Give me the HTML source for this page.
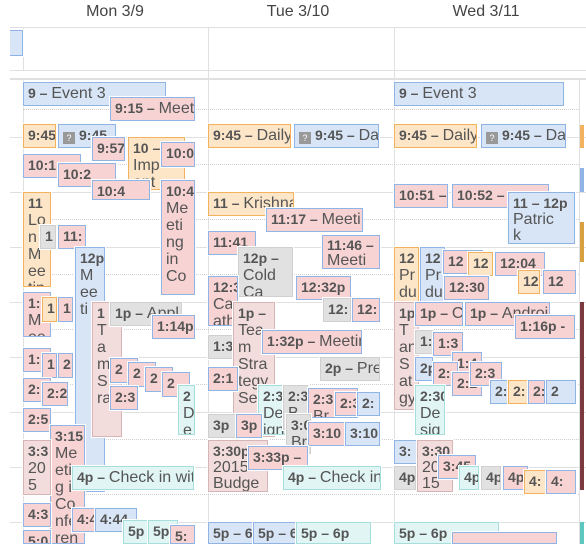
<!DOCTYPE html>
<html><head><meta charset="utf-8"><style>
*{margin:0;padding:0;box-sizing:border-box}
body{width:586px;height:544px;overflow:hidden;background:#fff;font-family:"Liberation Sans",Arial,sans-serif;color:#555;position:relative}
.h{position:absolute;top:3px;font-size:16px;color:#444;width:120px;text-align:center}
.l{position:absolute;background:#e0e0e0}
.d{position:absolute;left:23px;width:556px;height:0;border-top:1px dotted #d0d0d0}
.e{position:absolute;overflow:hidden;border:1px solid #90b4e6;outline:1px solid #fff;padding:2px 4px;font-size:16px;line-height:17px;white-space:nowrap}
.e b{font-size:14px}
.bl{background:#d8e5f6;border-color:#90b4e6}
.pk{background:#f7d3d3;border-color:#90b4e6}
.or{background:#fde6c8;border-color:#f2b25e}
.gr{background:#e1e1e1;border-color:#d0d0d0}
.tl{background:#e0f5f4;border-color:#a6dedb}
.mv{background:#f2dcdc;border-color:#d5b5b5}
.q{display:inline-block;width:12px;height:12px;background:#999;color:#fff;font-size:9px;line-height:12px;text-align:center;vertical-align:-1px;margin-right:4px}
</style></head><body>
<div class="h" style="left:55px">Mon 3/9</div>
<div class="h" style="left:238px">Tue 3/10</div>
<div class="h" style="left:426px">Wed 3/11</div>
<div class="l" style="left:10px;top:27px;width:576px;height:1px"></div>
<div class="l" style="left:10px;top:70px;width:576px;height:1px"></div>
<div class="l" style="left:10px;top:78px;width:576px;height:2px"></div>
<div class="l" style="left:23px;top:28px;width:1px;height:43px"></div>
<div class="l" style="left:208px;top:28px;width:1px;height:516px"></div>
<div class="l" style="left:394px;top:28px;width:1px;height:516px"></div>
<div class="l" style="left:579px;top:80px;width:1px;height:464px"></div>
<div class="l" style="left:23px;top:80px;width:1px;height:464px"></div>
<div class="e bl" style="left:10px;top:30px;width:13px;height:26px;border-left:none"></div>
<div class="l" style="left:10px;top:137px;width:576px;height:1px"></div>
<div class="l" style="left:10px;top:192px;width:576px;height:1px"></div>
<div class="l" style="left:10px;top:247px;width:576px;height:1px"></div>
<div class="l" style="left:10px;top:302px;width:576px;height:1px"></div>
<div class="l" style="left:10px;top:357px;width:576px;height:1px"></div>
<div class="l" style="left:10px;top:412px;width:576px;height:1px"></div>
<div class="l" style="left:10px;top:467px;width:576px;height:1px"></div>
<div class="l" style="left:10px;top:522px;width:576px;height:1px"></div>
<div class="d" style="top:109px"></div><div class="d" style="top:164px"></div><div class="d" style="top:219px"></div><div class="d" style="top:274px"></div><div class="d" style="top:329px"></div><div class="d" style="top:384px"></div><div class="d" style="top:439px"></div><div class="d" style="top:494px"></div>
<div class="l" style="left:580px;top:125px;width:4px;height:23px;background:#f2b25e"></div>
<div class="l" style="left:580px;top:168px;width:4px;height:24px;background:#90b4e6"></div>
<div class="l" style="left:580px;top:222px;width:4px;height:40px;background:#d9a040"></div>
<div class="l" style="left:580px;top:302px;width:4px;height:188px;background:#7a3a40"></div>
<div class="l" style="left:580px;top:522px;width:4px;height:22px;background:#5cc8c0"></div>

<!-- Mon -->
<div class="e bl" style="left:23px;top:82px;width:143px;height:24px"><b>9 – </b>Event 3</div>
<div class="e pk" style="left:110px;top:97px;width:85px;height:24px"><b>9:15 – </b>Meet</div>
<div class="e or" style="left:23px;top:124px;width:33px;height:24px"><b>9:45</b></div>
<div class="e bl" style="left:58px;top:124px;width:58px;height:24px"><span class="q">?</span><b>9:45</b></div>
<div class="e pk" style="left:92px;top:137px;width:33px;height:24px"><b>9:57</b></div>
<div class="e or" style="left:128px;top:137px;width:57px;height:53px;white-space:normal"><b>10 –</b><br>Imp<br>ant</div>
<div class="e pk" style="left:161px;top:142px;width:34px;height:25px"><b>10:0</b></div>
<div class="e pk" style="left:23px;top:154px;width:58px;height:24px"><b>10:1</b></div>
<div class="e pk" style="left:58px;top:163px;width:58px;height:24px"><b>10:2</b></div>
<div class="e pk" style="left:92px;top:180px;width:58px;height:20px"><b>10:4</b></div>
<div class="e pk" style="left:161px;top:180px;width:34px;height:115px"><b>10:4</b><br>Me<br>eti<br>ng<br>in<br>Co</div>
<div class="e or" style="left:23px;top:192px;width:28px;height:95px"><b>11</b><br>Lo<br>n<br>M<br>ee<br>tin</div>
<div class="e gr" style="left:40px;top:225px;width:16px;height:24px"><b>1</b></div>
<div class="e pk" style="left:58px;top:225px;width:28px;height:24px"><b>11:</b></div>
<div class="e bl" style="left:75px;top:247px;width:30px;height:245px"><b>12p</b><br>M<br>ee<br>ti</div>
<div class="e pk" style="left:23px;top:292px;width:28px;height:45px"><b>1:</b><br>M<br>ee</div>
<div class="e or" style="left:42px;top:297px;width:15px;height:25px"><b>1</b></div>
<div class="e pk" style="left:58px;top:297px;width:15px;height:25px"><b>1</b></div>
<div class="e mv" style="left:92px;top:302px;width:30px;height:135px"><b>1</b><br>T<br>a<br>m<br>S<br>ra</div>
<div class="e gr" style="left:110px;top:302px;width:72px;height:24px"><b>1p – </b>Appl</div>
<div class="e pk" style="left:152px;top:315px;width:43px;height:24px"><b>1:14p</b></div>
<div class="e pk" style="left:23px;top:348px;width:28px;height:24px"><b>1:</b></div>
<div class="e pk" style="left:42px;top:353px;width:15px;height:25px"><b>1</b></div>
<div class="e pk" style="left:58px;top:353px;width:15px;height:25px"><b>2</b></div>
<div class="e pk" style="left:110px;top:358px;width:28px;height:25px"><b>2</b></div>
<div class="e pk" style="left:128px;top:362px;width:28px;height:25px"><b>2</b></div>
<div class="e pk" style="left:145px;top:367px;width:28px;height:25px"><b>2</b></div>
<div class="e pk" style="left:162px;top:372px;width:28px;height:25px"><b>2</b></div>
<div class="e tl" style="left:178px;top:385px;width:17px;height:50px"><b>2</b><br>D<br>e</div>
<div class="e pk" style="left:23px;top:378px;width:28px;height:24px"><b>2:</b></div>
<div class="e pk" style="left:42px;top:382px;width:26px;height:24px"><b>2:2</b></div>
<div class="e pk" style="left:110px;top:386px;width:28px;height:24px"><b>2:3</b></div>
<div class="e pk" style="left:23px;top:408px;width:28px;height:24px"><b>2:5</b></div>
<div class="e pk" style="left:50px;top:425px;width:35px;height:119px"><b>3:15</b><br>Me<br>eti<br>g i<br>Co<br>nfe<br>ren</div>
<div class="e mv" style="left:23px;top:440px;width:28px;height:55px"><b>3:3</b><br>20<br>5</div>
<div class="e tl" style="left:72px;top:466px;width:122px;height:24px"><b>4p – </b>Check in wit</div>
<div class="e pk" style="left:23px;top:503px;width:28px;height:24px"><b>4:3</b></div>
<div class="e pk" style="left:72px;top:508px;width:28px;height:24px"><b>4:4</b></div>
<div class="e bl" style="left:95px;top:508px;width:42px;height:24px"><b>4:44</b></div>
<div class="e tl" style="left:123px;top:520px;width:35px;height:24px"><b>5p</b></div>
<div class="e tl" style="left:148px;top:520px;width:30px;height:24px"><b>5p</b></div>
<div class="e pk" style="left:170px;top:525px;width:25px;height:19px"><b>5:</b></div>
<div class="e pk" style="left:23px;top:530px;width:28px;height:14px"><b>5:0</b></div>

<!-- Tue -->
<div class="e or" style="left:208px;top:124px;width:83px;height:24px"><b>9:45 – </b>Daily</div>
<div class="e bl" style="left:294px;top:124px;width:85px;height:24px"><span class="q">?</span><b>9:45 – </b>Da</div>
<div class="e or" style="left:208px;top:192px;width:86px;height:24px"><b>11 – </b>Krishna</div>
<div class="e pk" style="left:266px;top:208px;width:97px;height:24px"><b>11:17 – </b>Meeti</div>
<div class="e pk" style="left:208px;top:231px;width:48px;height:24px"><b>11:41</b></div>
<div class="e pk" style="left:322px;top:235px;width:58px;height:34px;line-height:15px"><b>11:46 –</b><br>Meeti</div>
<div class="e gr" style="left:238px;top:247px;width:55px;height:50px"><b>12p –</b><br>Cold<br>Ca</div>
<div class="e pk" style="left:208px;top:276px;width:30px;height:50px"><b>12:3</b><br>Ca<br>ath</div>
<div class="e pk" style="left:296px;top:276px;width:55px;height:24px"><b>12:32p</b></div>
<div class="e gr" style="left:323px;top:298px;width:28px;height:24px"><b>12:</b></div>
<div class="e pk" style="left:352px;top:298px;width:28px;height:24px"><b>12:</b></div>
<div class="e gr" style="left:208px;top:335px;width:28px;height:24px"><b>1:3</b></div>
<div class="e mv" style="left:233px;top:302px;width:42px;height:135px"><b>1p –</b><br>Tea<br>m<br>Stra<br>tegy<br>Se</div>
<div class="e pk" style="left:262px;top:330px;width:100px;height:24px"><b>1:32p – </b>Meetin</div>
<div class="e pk" style="left:208px;top:367px;width:30px;height:24px"><b>2:1</b></div>
<div class="e gr" style="left:320px;top:357px;width:60px;height:24px"><b>2p – </b>Pre</div>
<div class="e tl" style="left:258px;top:385px;width:40px;height:50px"><b>2:3</b><br>De<br>ign</div>
<div class="e gr" style="left:283px;top:385px;width:25px;height:45px"><b>2:3</b><br>B</div>
<div class="e pk" style="left:308px;top:388px;width:50px;height:30px"><b>2:3</b><br>Br</div>
<div class="e pk" style="left:335px;top:392px;width:28px;height:24px"><b>2:3</b></div>
<div class="e bl" style="left:357px;top:392px;width:23px;height:24px"><b>2:</b></div>
<div class="e gr" style="left:208px;top:414px;width:28px;height:24px"><b>3p</b></div>
<div class="e pk" style="left:236px;top:414px;width:26px;height:24px"><b>3p</b></div>
<div class="e gr" style="left:286px;top:414px;width:25px;height:40px"><b>3:0</b><br>Br</div>
<div class="e pk" style="left:308px;top:422px;width:42px;height:24px"><b>3:10</b></div>
<div class="e bl" style="left:345px;top:422px;width:35px;height:24px"><b>3:10</b></div>
<div class="e mv" style="left:208px;top:440px;width:60px;height:52px;line-height:16px"><b>3:30p</b><br>2015<br>Budge</div>
<div class="e pk" style="left:248px;top:446px;width:60px;height:24px"><b>3:33p – </b></div>
<div class="e tl" style="left:283px;top:466px;width:98px;height:24px"><b>4p – </b>Check in</div>
<div class="e bl" style="left:208px;top:522px;width:45px;height:22px"><b>5p – 6</b></div>
<div class="e bl" style="left:253px;top:522px;width:45px;height:22px"><b>5p – 6</b></div>
<div class="e tl" style="left:296px;top:522px;width:75px;height:22px"><b>5p – 6p</b></div>

<!-- Wed -->
<div class="e bl" style="left:394px;top:82px;width:170px;height:24px"><b>9 – </b>Event 3</div>
<div class="e or" style="left:394px;top:124px;width:83px;height:24px"><b>9:45 – </b>Daily</div>
<div class="e bl" style="left:481px;top:124px;width:85px;height:24px"><span class="q">?</span><b>9:45 – </b>Da</div>
<div class="e pk" style="left:394px;top:184px;width:54px;height:24px"><b>10:51 – </b></div>
<div class="e pk" style="left:452px;top:184px;width:97px;height:24px"><b>10:52 – </b></div>
<div class="e bl" style="left:508px;top:192px;width:67px;height:52px;line-height:16px"><b>11 – 12p</b><br>Patric<br>k</div>
<div class="e or" style="left:394px;top:247px;width:25px;height:55px"><b>12</b><br>Pr<br>du</div>
<div class="e bl" style="left:420px;top:247px;width:25px;height:55px"><b>12</b><br>Pr<br>du</div>
<div class="e pk" style="left:443px;top:250px;width:40px;height:24px"><b>12</b></div>
<div class="e or" style="left:468px;top:252px;width:25px;height:24px"><b>12</b></div>
<div class="e pk" style="left:495px;top:252px;width:50px;height:24px"><b>12:04</b></div>
<div class="e or" style="left:518px;top:270px;width:22px;height:24px"><b>12</b></div>
<div class="e pk" style="left:543px;top:270px;width:33px;height:24px"><b>12</b></div>
<div class="e pk" style="left:444px;top:276px;width:45px;height:24px"><b>12:30</b></div>
<div class="e mv" style="left:394px;top:302px;width:25px;height:108px"><b>1p</b><br>T<br>an<br>S<br>at<br>gy</div>
<div class="e pk" style="left:415px;top:302px;width:48px;height:24px"><b>1p – </b>C</div>
<div class="e pk" style="left:465px;top:302px;width:85px;height:24px"><b>1p – </b>Androi</div>
<div class="e pk" style="left:515px;top:315px;width:60px;height:24px"><b>1:16p -</b></div>
<div class="e gr" style="left:415px;top:330px;width:18px;height:24px"><b>1:</b></div>
<div class="e pk" style="left:433px;top:332px;width:30px;height:24px"><b>1:3</b></div>
<div class="e pk" style="left:452px;top:352px;width:30px;height:24px"><b>1:4</b></div>
<div class="e bl" style="left:415px;top:357px;width:18px;height:24px"><b>2p</b></div>
<div class="e pk" style="left:433px;top:362px;width:25px;height:24px"><b>2:</b></div>
<div class="e pk" style="left:452px;top:372px;width:30px;height:24px"><b>2:2</b></div>
<div class="e pk" style="left:470px;top:362px;width:32px;height:24px"><b>2:3</b></div>
<div class="e bl" style="left:490px;top:380px;width:30px;height:24px"><b>2:</b></div>
<div class="e or" style="left:508px;top:380px;width:20px;height:24px"><b>2:</b></div>
<div class="e pk" style="left:528px;top:380px;width:17px;height:24px"><b>2:</b></div>
<div class="e bl" style="left:546px;top:380px;width:30px;height:24px"><b>2</b></div>
<div class="e tl" style="left:415px;top:385px;width:30px;height:50px"><b>2:30</b><br>De<br>sig</div>
<div class="e bl" style="left:394px;top:440px;width:25px;height:24px"><b>3:</b></div>
<div class="e mv" style="left:417px;top:440px;width:36px;height:52px;line-height:16px"><b>3:30</b><br>20<br>15</div>
<div class="e pk" style="left:438px;top:455px;width:38px;height:24px"><b>3:45</b></div>
<div class="e gr" style="left:394px;top:466px;width:22px;height:24px"><b>4p</b></div>
<div class="e tl" style="left:459px;top:466px;width:20px;height:24px"><b>4p</b></div>
<div class="e gr" style="left:481px;top:466px;width:20px;height:24px"><b>4p</b></div>
<div class="e pk" style="left:503px;top:466px;width:25px;height:24px"><b>4p</b></div>
<div class="e or" style="left:524px;top:470px;width:22px;height:24px"><b>4:</b></div>
<div class="e pk" style="left:546px;top:470px;width:30px;height:24px"><b>4:</b></div>
<div class="e tl" style="left:394px;top:522px;width:105px;height:22px"><b>5p – 6p</b></div>
<div class="e pk" style="left:452px;top:532px;width:105px;height:12px"></div>
</body></html>
